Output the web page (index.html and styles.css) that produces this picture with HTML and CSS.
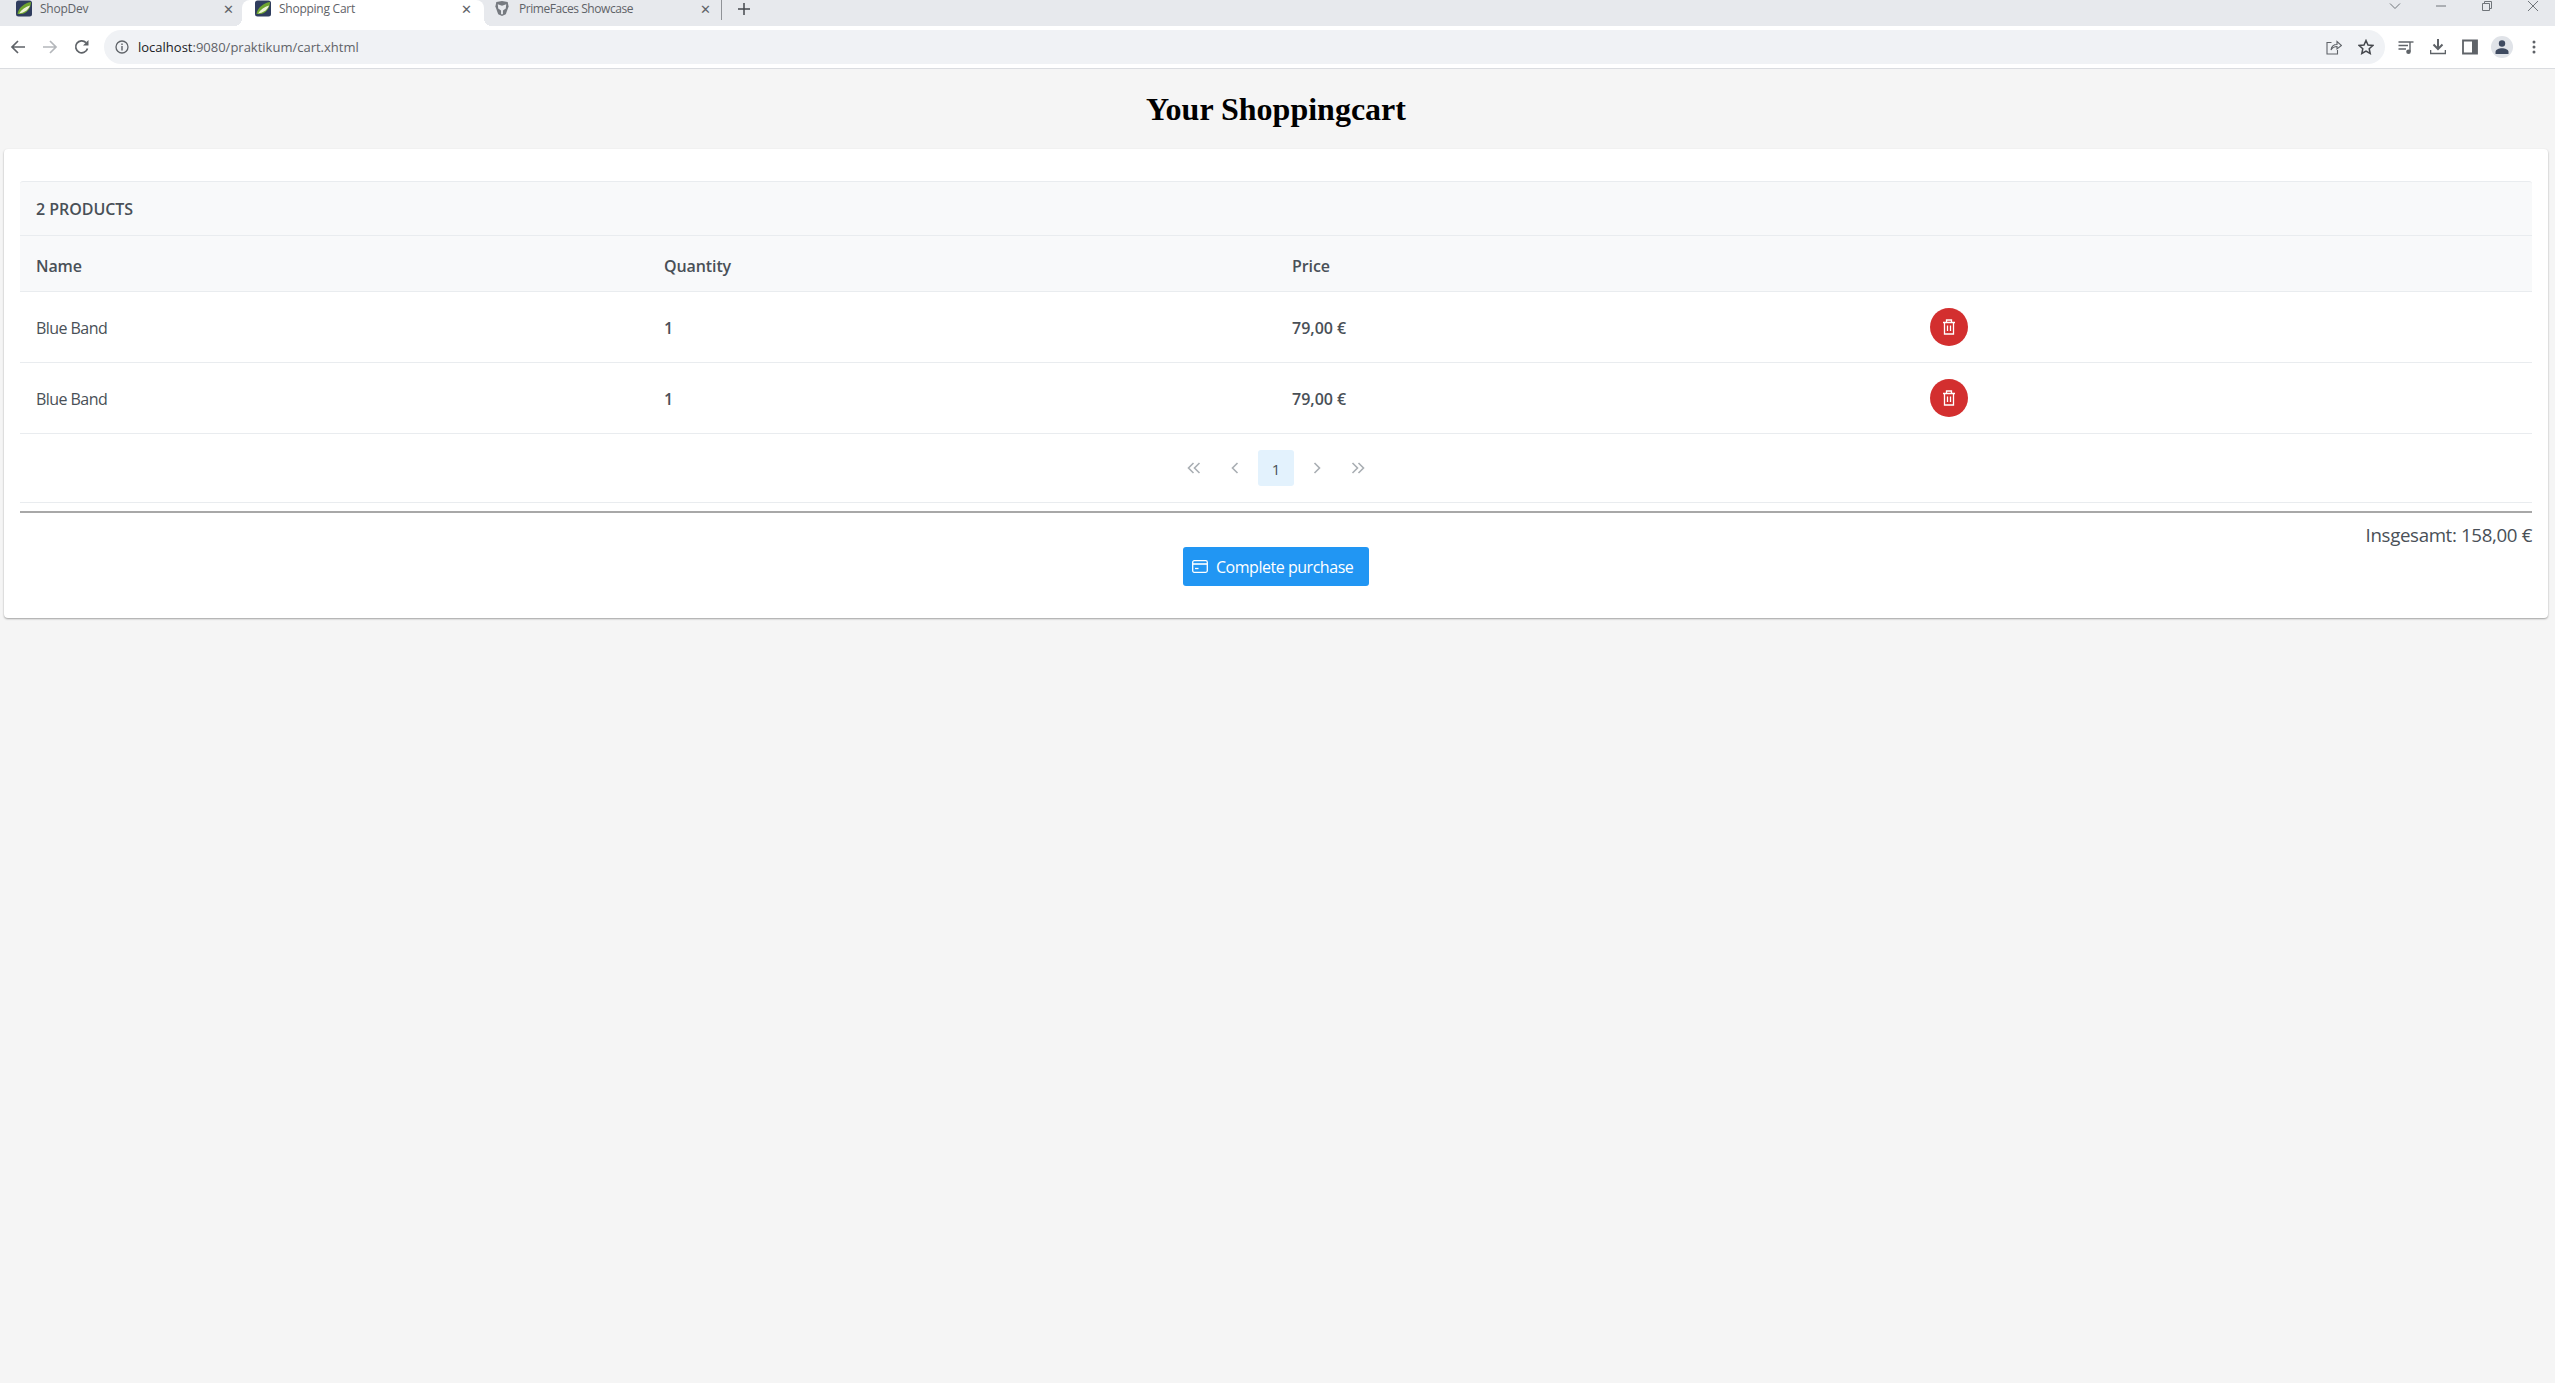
FILE: index.html
```html
<!DOCTYPE html>
<html lang="en">
<head>
    <meta charset="UTF-8">
    <title>Shopping Cart</title>
    <link rel="stylesheet" href="styles.css">
</head>
<body>
    <!-- browser chrome -->
    <div class="tabbar">
        <div class="tab tab-first">
            <svg class="favicon" viewBox="0 0 16 16"><rect width="16" height="16" rx="2.5" fill="#2f3d5e"/><path d="M1.5 13.5C2.5 7.5 8 2.5 15 1.5C15 8 10.5 14 4 13.5Z" fill="#6fa52f"/><path d="M3 13C5.5 9 9.5 6.5 14 5C13 8.5 9 12 5 12.5Z" fill="#eef3d8"/></svg>
            <span class="tab-title">ShopDev</span>
            <span class="tab-close">✕</span>
        </div>
        <div class="tab tab-active">
            <svg class="favicon" viewBox="0 0 16 16"><rect width="16" height="16" rx="2.5" fill="#2f3d5e"/><path d="M1.5 13.5C2.5 7.5 8 2.5 15 1.5C15 8 10.5 14 4 13.5Z" fill="#6fa52f"/><path d="M3 13C5.5 9 9.5 6.5 14 5C13 8.5 9 12 5 12.5Z" fill="#eef3d8"/></svg>
            <span class="tab-title">Shopping Cart</span>
            <span class="tab-close">✕</span>
        </div>
        <div class="tab tab-last">
            <svg class="favicon" viewBox="0 0 16 18"><path d="M2 2L8 1L14 2L15 7L12 15L8 17L4 15L1 7Z" fill="#767a80"/><path d="M3.5 4.5L8 6L12.5 4.5L12 9L9 11V15H7V11L4 9Z" fill="#e7e9ed"/></svg>
            <span class="tab-title">PrimeFaces Showcase</span>
            <span class="tab-close">✕</span>
        </div>
        <span class="tab-sep"></span>
        <svg class="tab-new" viewBox="0 0 12 12"><path d="M6 0V12M0 6H12" stroke="#45484d" stroke-width="1.5"/></svg>
        <div class="window-btns">
            <svg class="win-btn" viewBox="0 0 12 12"><path d="M1 3.5L6 8.5L11 3.5" fill="none" stroke="#70757a"/></svg>
            <svg class="win-btn" viewBox="0 0 12 12"><path d="M1 6H11" stroke="#70757a"/></svg>
            <svg class="win-btn" viewBox="0 0 12 12"><path d="M1.5 3.5H8.5V10.5H1.5ZM3.5 3.5V1.5H10.5V8.5H8.5" fill="none" stroke="#70757a"/></svg>
            <svg class="win-btn" viewBox="0 0 12 12"><path d="M1 1L11 11M11 1L1 11" stroke="#70757a"/></svg>
        </div>
    </div>

    <div class="toolbar">
        <svg class="nav-icon" viewBox="0 0 16 16"><path d="M15 8H2M8 2L2 8L8 14" fill="none" stroke="#5f6368" stroke-width="1.7"/></svg>
        <svg class="nav-icon" viewBox="0 0 16 16"><path d="M1 8H14M8 2L14 8L8 14" fill="none" stroke="#b4b7bb" stroke-width="1.7"/></svg>
        <svg class="nav-icon" viewBox="0 0 16 16"><path d="M13.5 9.5A6 6 0 1 1 12 3.6" fill="none" stroke="#5f6368" stroke-width="1.7"/><path d="M14.5 1V6.5H9Z" fill="#5f6368"/></svg>
        <div class="omnibox">
            <svg class="info-icon" viewBox="0 0 14 14"><circle cx="7" cy="7" r="6" fill="none" stroke="#5f6368" stroke-width="1.3"/><path d="M7 6V10.5M7 3.4V5" stroke="#5f6368" stroke-width="1.4"/></svg>
            <span class="url"><span class="url-host">localhost</span>:9080/praktikum/cart.xhtml</span>
            <svg class="omni-icon" viewBox="0 0 16 16"><path d="M5.5 3.5H1V15H11.5V11M5 11C5.5 7.5 8 5.5 11 5.5V2.5L15.5 6.5L11 10V7.5C8.5 7.5 6.5 8.5 5 11Z" fill="none" stroke="#5f6368" stroke-width="1.1"/></svg>
            <svg class="omni-icon" viewBox="0 0 16 16"><path d="M8 1.5L10 6L14.8 6.5L11.2 9.7L12.2 14.5L8 12L3.8 14.5L4.8 9.7L1.2 6.5L6 6Z" fill="none" stroke="#45484d" stroke-width="1.5"/></svg>
        </div>
        <div class="tool-icons">
            <svg class="tool-icon" viewBox="0 0 16 16"><path d="M0.5 3H12M0.5 6.5H10M0.5 10H8" stroke="#5f6368" stroke-width="1.3"/><path d="M12 3V12.5" stroke="#5f6368" stroke-width="1.4"/><path d="M12 3H15.5" stroke="#5f6368" stroke-width="1.4"/><circle cx="10.5" cy="12.7" r="2.3" fill="#5f6368"/></svg>
            <svg class="tool-icon" viewBox="0 0 16 16"><path d="M8 0V9M3.5 5.5L8 10L12.5 5.5" fill="none" stroke="#5f6368" stroke-width="2"/><path d="M0.5 11V14.5H15.5V11" fill="none" stroke="#5f6368" stroke-width="1.6"/></svg>
            <svg class="tool-icon" viewBox="0 0 16 16"><path d="M1 1.5H15V14.5H1Z" fill="none" stroke="#5f6368" stroke-width="1.8"/><path d="M10 1.5H15V14.5H10Z" fill="#5f6368"/></svg>
            <span class="avatar">
                <svg class="avatar-icon" viewBox="0 0 14 14"><circle cx="7" cy="3.5" r="3.2" fill="#3e4a60"/><path d="M0.5 14V12C0.5 9.5 4 8.3 7 8.3C10 8.3 13.5 9.5 13.5 12V14Z" fill="#3e4a60"/></svg>
            </span>
            <svg class="menu-icon" viewBox="0 0 4 14"><circle cx="2" cy="2" r="1.5" fill="#5f6368"/><circle cx="2" cy="7" r="1.5" fill="#5f6368"/><circle cx="2" cy="12" r="1.5" fill="#5f6368"/></svg>
        </div>
    </div>

    <!-- page -->
    <h1 class="page-title">Your Shoppingcart</h1>

    <div class="card">
        <div class="table-header">2 PRODUCTS</div>
        <table class="cart-table">
            <thead>
                <tr>
                    <th>Name</th>
                    <th>Quantity</th>
                    <th>Price</th>
                    <th></th>
                </tr>
            </thead>
            <tbody>
                <tr>
                    <td>Blue Band</td>
                    <td class="strong">1</td>
                    <td class="strong">79,00 €</td>
                    <td class="action-cell">
                        <button class="delete-btn" type="button">
                            <svg class="trash-icon" viewBox="0 0 14 16"><path d="M1 3.5H13M4.5 3.5V1H9.5V3.5M2.5 3.5V15H11.5V3.5M5.5 6.5V12M8.5 6.5V12" fill="none" stroke="#fff" stroke-width="1.3"/></svg>
                        </button>
                    </td>
                </tr>
                <tr>
                    <td>Blue Band</td>
                    <td class="strong">1</td>
                    <td class="strong">79,00 €</td>
                    <td class="action-cell">
                        <button class="delete-btn" type="button">
                            <svg class="trash-icon" viewBox="0 0 14 16"><path d="M1 3.5H13M4.5 3.5V1H9.5V3.5M2.5 3.5V15H11.5V3.5M5.5 6.5V12M8.5 6.5V12" fill="none" stroke="#fff" stroke-width="1.3"/></svg>
                        </button>
                    </td>
                </tr>
            </tbody>
        </table>

        <div class="paginator">
            <svg class="page-nav" viewBox="0 0 14 14"><path d="M6.5 2L1.5 7L6.5 12M12.5 2L7.5 7L12.5 12" fill="none" stroke="#a9aeb3" stroke-width="1.6"/></svg>
            <svg class="page-nav" viewBox="0 0 14 14"><path d="M9.5 2L4.5 7L9.5 12" fill="none" stroke="#a9aeb3" stroke-width="1.6"/></svg>
            <span class="page-current">1</span>
            <svg class="page-nav" viewBox="0 0 14 14"><path d="M4.5 2L9.5 7L4.5 12" fill="none" stroke="#a9aeb3" stroke-width="1.6"/></svg>
            <svg class="page-nav" viewBox="0 0 14 14"><path d="M1.5 2L6.5 7L1.5 12M7.5 2L12.5 7L7.5 12" fill="none" stroke="#a9aeb3" stroke-width="1.6"/></svg>
        </div>

        <hr class="divider">
        <div class="total">Insgesamt: 158,00 €</div>
        <div class="purchase-row">
            <button class="purchase-btn" type="button">
                <svg class="purchase-icon" viewBox="0 0 16 13"><rect x="0.7" y="0.7" width="14.6" height="11.6" rx="1.5" fill="none" stroke="#fff" stroke-width="1.3"/><path d="M1 4H15" stroke="#fff" stroke-width="1.6"/><path d="M3 8.5H6.5" stroke="#fff" stroke-width="1.3"/></svg>
                Complete purchase
            </button>
        </div>
    </div>
</body>
</html>
```

FILE: styles.css
```css
body {
    margin: 0;
    min-height: 1383px;
    background-color: #f5f5f5;
    font-family: "Open Sans", sans-serif;
    font-size: 16px;
    color: #495057;
}

/* tabs */
.tabbar {
    display: flex;
    align-items: flex-start;
    height: 26px;
    background-color: #e7e9ed;
}
.tab {
    display: flex;
    align-items: flex-start;
    box-sizing: border-box;
    height: 26px;
    position: relative;
    font-size: 12px;
    letter-spacing: -0.25px;
    color: #5f6368;
}
.tab-first {
    width: 242px;
    padding-left: 16px;
}
.tab-active {
    width: 242px;
    padding-left: 13px;
    background-color: #fff;
    border-radius: 8px 8px 0 0;
}
.tab-active::before,
.tab-active::after {
    content: "";
    position: absolute;
    bottom: 0;
    width: 8px;
    height: 8px;
}
.tab-active::before {
    left: -8px;
    background: radial-gradient(circle at 0 0, transparent 8px, #fff 8px);
}
.tab-active::after {
    right: -8px;
    background: radial-gradient(circle at 100% 0, transparent 8px, #fff 8px);
}
.tab-active .tab-close {
    margin-right: 12px;
}
.tab-last {
    width: 237px;
    padding-left: 9px;
    letter-spacing: -0.45px;
}
.tab-last .favicon {
    width: 18px;
    margin-right: 8px;
}
.tab-last .tab-close {
    margin-right: 10px;
}
.favicon {
    width: 16px;
    height: 17px;
    flex: none;
    margin-right: 8px;
}
.tab-title {
    flex: 1;
    line-height: 18px;
    white-space: nowrap;
}
.tab-close {
    width: 12px;
    margin-right: 8px;
    line-height: 18px;
    font-size: 13px;
    text-align: center;
    color: #5f6368;
}
.tab-sep {
    width: 1px;
    height: 20px;
    background-color: #8f9297;
}
.tab-new {
    width: 12px;
    height: 12px;
    margin: 3px 0 0 16px;
}
.window-btns {
    display: flex;
    gap: 34px;
    margin-left: auto;
    margin-right: 16px;
}
.win-btn {
    width: 12px;
    height: 12px;
}

/* toolbar */
.toolbar {
    display: flex;
    align-items: center;
    box-sizing: border-box;
    height: 43px;
    padding-left: 10px;
    background-color: #fff;
    border-bottom: 1px solid #dadce0;
}
.nav-icon {
    width: 16px;
    height: 16px;
    margin-right: 16px;
}
.omnibox {
    display: flex;
    align-items: center;
    box-sizing: border-box;
    width: 2281px;
    height: 34px;
    margin-left: -2px;
    padding: 0 11px;
    border-radius: 17px;
    background-color: #f0f2f5;
}
.info-icon {
    width: 14px;
    height: 14px;
    margin-right: 9px;
}
.url {
    flex: 1;
    font-size: 13px;
    color: #5f6368;
}
.url-host {
    color: #202124;
}
.omni-icon {
    width: 16px;
    height: 16px;
    margin-left: 16px;
}
.tool-icons {
    display: flex;
    align-items: center;
    margin-left: 13px;
}
.tool-icon {
    width: 16px;
    height: 16px;
    margin-right: 16px;
}
.avatar {
    display: flex;
    align-items: center;
    justify-content: center;
    width: 22px;
    height: 22px;
    margin-left: -3px;
    border-radius: 50%;
    background-color: #e0e3e8;
}
.avatar-icon {
    width: 14px;
    height: 14px;
}
.menu-icon {
    width: 4px;
    height: 14px;
    margin-left: 19px;
}

/* page */
.page-title {
    margin: 0;
    height: 80px;
    padding-right: 3px;
    line-height: 80px;
    text-align: center;
    font-family: "Liberation Serif", serif;
    font-size: 32px;
    font-weight: bold;
    color: #000;
}
.card {
    margin: 0 7px 0 4px;
    padding: 32px 16px;
    background-color: #fff;
    border-radius: 4px;
    box-shadow: 0 1px 2px rgba(0, 0, 0, 0.35);
}
.table-header {
    box-sizing: border-box;
    height: 55px;
    padding: 0 16px;
    line-height: 54px;
    font-weight: 600;
    letter-spacing: -0.05px;
    background-color: #f8f9fa;
    border-top: 1px solid #e9ecef;
    border-bottom: 1px solid #e9ecef;
    border-radius: 3px 3px 0 0;
}
.cart-table {
    width: 100%;
    table-layout: fixed;
    border-collapse: separate;
    border-spacing: 0;
}
.cart-table th {
    height: 56px;
    padding: 4px 16px 0;
    box-sizing: border-box;
    text-align: left;
    font-weight: 600;
    letter-spacing: -0.1px;
    background-color: #f8f9fa;
    border-bottom: 1px solid #e9ecef;
}
.cart-table td {
    height: 71px;
    padding: 2px 16px 0;
    box-sizing: border-box;
    letter-spacing: -0.55px;
    border-bottom: 1px solid #e9ecef;
}
.cart-table .strong {
    font-weight: 600;
    letter-spacing: 0;
}
.cart-table .action-cell {
    padding: 0 16px 0 26px;
}
.delete-btn {
    display: flex;
    align-items: center;
    justify-content: center;
    width: 38px;
    height: 38px;
    padding: 0;
    border: 0;
    border-radius: 50%;
    background-color: #d32f2f;
}
.trash-icon {
    width: 14px;
    height: 16px;
}
.paginator {
    display: flex;
    align-items: center;
    justify-content: center;
    gap: 5px;
    height: 69px;
    box-sizing: border-box;
    border-bottom: 1px solid #e9ecef;
}
.page-nav {
    width: 36px;
    height: 14px;
}
.page-current {
    width: 36px;
    height: 36px;
    line-height: 38px;
    text-align: center;
    font-size: 15px;
    border-radius: 3px;
    background-color: #e3f2fd;
}
.divider {
    margin: 8px 0 0;
    height: 2px;
    border: 0;
    background-color: #a8a8a8;
}
.total {
    margin-top: 7px;
    height: 27px;
    line-height: 30px;
    text-align: right;
    font-size: 18.7px;
    letter-spacing: -0.35px;
}
.purchase-row {
    display: flex;
    justify-content: center;
}
.purchase-btn {
    display: flex;
    align-items: center;
    gap: 8px;
    box-sizing: border-box;
    width: 186px;
    height: 39px;
    padding: 0 0 0 9px;
    border: 0;
    border-radius: 3px;
    font-family: "Open Sans", sans-serif;
    font-size: 16px;
    letter-spacing: -0.47px;
    color: #fff;
    background-color: #2196f3;
}
.purchase-icon {
    width: 16px;
    height: 13px;
}
```
